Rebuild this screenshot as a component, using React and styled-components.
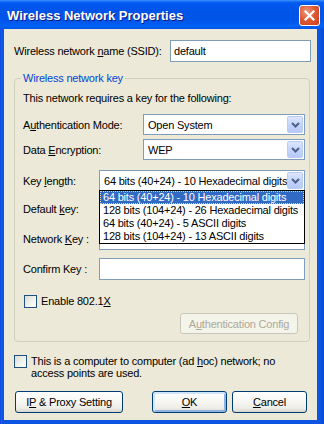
import React from 'react';
import styled, { createGlobalStyle } from 'styled-components';

const Global = createGlobalStyle`
  html, body { margin: 0; padding: 0; width: 324px; height: 424px; overflow: hidden; background: #0B55E2; }
  #root { width: 324px; height: 424px; }
  * { box-sizing: border-box; }
`;

const Window = styled.div`
  width: 324px;
  height: 424px;
  display: flex;
  flex-direction: column;
  background: linear-gradient(90deg, #0831D9 0px, #166AEE 1px, #0B55E2 2px, #0B55E2 320px, #0A4BD6 323px);
  font-family: "Liberation Sans", Arial, sans-serif;
  font-size: 11px;
  letter-spacing: -0.2px;
  color: #000;
`;

const TitleBar = styled.div`
  height: 29px;
  flex: none;
  display: flex;
  align-items: center;
  justify-content: space-between;
  padding: 0 4px 0 7px;
  background: linear-gradient(180deg, #3D95FF 0px, #0A63F2 2px, #0058EE 4px, #0053E6 14px, #0057EC 22px, #0262F5 26px, #0055E5 29px);
`;

const Title = styled.span`
  color: #fff;
  font-weight: bold;
  font-size: 13px;
  letter-spacing: 0;
  text-shadow: 1px 1px 0 #0A1883;
  padding-top: 1px;
`;

const CloseBtn = styled.div`
  width: 21px;
  height: 21px;
  margin-top: 2px;
  border: 1px solid #fff;
  border-radius: 3px;
  background: radial-gradient(circle at 35% 30%, #EE9C80 0%, #E05A36 45%, #C83F1E 100%);
  display: flex;
  align-items: center;
  justify-content: center;
`;

const Body = styled.div`
  flex: 1;
  margin: 0 7px 4px 4px;
  background: #ECE9D8;
  padding: 11px 6px 0 10px;
  display: flex;
  flex-direction: column;
`;

const Row = styled.div`
  display: flex;
  align-items: center;
  height: ${p => p.$h || 21}px;
  margin-top: ${p => p.$mt || 0}px;
  justify-content: ${p => p.$between ? 'space-between' : 'flex-start'};
`;

const Label = styled.span`
  width: ${p => (p.$w ? `${p.$w}px` : 'auto')};
  flex: none;
  white-space: nowrap;
`;

const U = styled.span`
  text-decoration: underline;
  text-underline-offset: 1px;
`;

const TextInput = styled.div`
  width: ${p => p.$w}px;
  height: 22px;
  border: 1px solid #7F9DB9;
  background: #fff;
  padding-left: 3px;
  display: flex;
  align-items: center;
  white-space: nowrap;
`;

const Combo = styled.div`
  position: relative;
  width: ${p => p.$w}px;
  height: 21px;
  border: 1px solid #7F9DB9;
  background: #fff;
  display: flex;
  align-items: center;
  padding: 1px 1px 1px 4px;
  z-index: ${p => (p.$open ? 5 : 'auto')};
`;

const ComboText = styled.span`
  flex: 1;
  white-space: nowrap;
  overflow: hidden;
`;

const ComboBtn = styled.div`
  width: 16px;
  height: 17px;
  flex: none;
  border: 1px solid #BCCBF2;
  border-radius: 2px;
  background: linear-gradient(180deg, #DCE6FE 0%, #C6D6FC 45%, #B6C9F7 100%);
  display: flex;
  align-items: center;
  justify-content: center;
`;

const List = styled.div`
  position: absolute;
  top: 100%;
  left: -1px;
  right: -1px;
  border: 1px solid #000;
  background: #fff;
  display: flex;
  flex-direction: column;
`;

const Item = styled.div`
  height: 13px;
  line-height: 13px;
  padding-left: 3px;
  white-space: nowrap;
  background: ${p => (p.$sel ? '#316AC5' : '#fff')};
  color: ${p => (p.$sel ? '#fff' : '#000')};
  outline: ${p => (p.$sel ? '1px dotted #E8D9A0' : 'none')};
  outline-offset: -1px;
`;

const Group = styled.div`
  margin: 16px 1px 0 0;
  border: 1px solid #D0D0BF;
  border-radius: 4px;
  padding: 0 4px 7px 8px;
  display: flex;
  flex-direction: column;
`;

const Legend = styled.span`
  align-self: flex-start;
  margin: -7px 0 0 -2px;
  padding: 0 2px;
  line-height: 13px;
  color: #0046D5;
  background: #ECE9D8;
`;

const Para = styled.div`
  line-height: ${p => p.$lh || 13}px;
  margin-top: ${p => p.$mt || 0}px;
  white-space: nowrap;
`;

const Check = styled.div`
  width: 13px;
  height: 13px;
  flex: none;
  border: 1px solid #1C5180;
  background: linear-gradient(135deg, #DCDCD7 0%, #F3F3EF 60%, #FFFFFF 100%);
  margin-left: ${p => p.$ml || 0}px;
  margin-right: 4px;
  align-self: flex-start;
`;

const CheckRow = styled.div`
  display: flex;
  align-items: flex-start;
  margin-top: ${p => p.$mt || 0}px;
  line-height: ${p => p.$lh || 13}px;
`;

const Button = styled.div`
  width: ${p => p.$w}px;
  height: ${p => p.$h || 22}px;
  flex: none;
  border: 1px solid ${p => (p.$disabled ? '#C9C7BA' : '#003C74')};
  border-radius: 3px;
  background: ${p => (p.$disabled
    ? '#F5F4EA'
    : 'linear-gradient(180deg, #FFFFFF 0%, #F8F8F5 40%, #EEEDE8 80%, #D9D4C9 100%)')};
  color: ${p => (p.$disabled ? '#ACA899' : '#000')};
  box-shadow: ${p => (p.$default
    ? 'inset 1px 1px 0 1px #CEE7FF, inset -1px -1px 0 1px #8DB2E3'
    : 'none')};
  display: flex;
  align-items: center;
  justify-content: center;
  white-space: pre;
  margin-left: ${p => p.$ml || 0}px;
  margin-right: ${p => p.$mr || 0}px;
`;

const ButtonRow = styled.div`
  display: flex;
  align-items: center;
  margin-top: ${p => p.$mt || 0}px;
  justify-content: ${p => p.$end ? 'flex-end' : 'space-between'};
`;

const Pair = styled.div`
  display: flex;
  gap: 5px;
  margin-right: 4px;
`;

const Chevron = () => (
  <svg width="9" height="6" viewBox="0 0 9 6">
    <path d="M1 1 L4.5 4.5 L8 1" fill="none" stroke="#4D6185" strokeWidth="2" />
  </svg>
);

const CloseX = () => (
  <svg width="11" height="11" viewBox="0 0 11 11">
    <path d="M1.5 1.5 L9.5 9.5 M9.5 1.5 L1.5 9.5" stroke="#fff" strokeWidth="2.2" strokeLinecap="square" />
  </svg>
);

const keyOptions = [
  '64 bits (40+24) - 10 Hexadecimal digits',
  '128 bits (104+24) - 26 Hexadecimal digits',
  '64 bits (40+24) - 5 ASCII digits',
  '128 bits (104+24) - 13 ASCII digits',
];

export default function App() {
  return (
    <>
      <Global />
      <Window>
        <TitleBar>
          <Title>Wireless Network Properties</Title>
          <CloseBtn><CloseX /></CloseBtn>
        </TitleBar>
        <Body>
          <Row $h={22} $between>
            <Label>Wireless network <U>n</U>ame (SSID):</Label>
            <TextInput $w={141}>default</TextInput>
          </Row>

          <Group>
            <Legend>Wireless network key</Legend>
            <Para $mt={7}>This network requires a key for the following:</Para>

            <Row $mt={9}>
              <Label $w={120}>A<U>u</U>thentication Mode:</Label>
              <Combo $w={162}>
                <ComboText>Open System</ComboText>
                <ComboBtn><Chevron /></ComboBtn>
              </Combo>
            </Row>

            <Row $mt={4}>
              <Label $w={120}>Data <U>E</U>ncryption:</Label>
              <Combo $w={162}>
                <ComboText>WEP</ComboText>
                <ComboBtn><Chevron /></ComboBtn>
              </Combo>
            </Row>

            <Row $mt={10}>
              <Label $w={76}>Key <U>l</U>ength:</Label>
              <Combo $w={206} $open>
                <ComboText>{keyOptions[0]}</ComboText>
                <ComboBtn><Chevron /></ComboBtn>
                <List>
                  {keyOptions.map((o, i) => (
                    <Item key={o} $sel={i === 0}>{o}</Item>
                  ))}
                </List>
              </Combo>
            </Row>

            <Row $mt={7}>
              <Label $w={76}>Default <U>k</U>ey:</Label>
              <Combo $w={206}>
                <ComboText />
                <ComboBtn><Chevron /></ComboBtn>
              </Combo>
            </Row>

            <Row $mt={9} $h={22}>
              <Label $w={76}>Network <U>K</U>ey :</Label>
              <TextInput $w={206} />
            </Row>

            <Row $mt={8} $h={22}>
              <Label $w={76}>Confirm Key :</Label>
              <TextInput $w={206} />
            </Row>

            <CheckRow $mt={15}>
              <Check $ml={1} />
              <span>Enable 802.1<U>X</U></span>
            </CheckRow>

            <ButtonRow $mt={5} $end>
              <Button $w={118} $h={21} $disabled $mr={7}>A<U>u</U>thentication Config</Button>
            </ButtonRow>
          </Group>

          <CheckRow $mt={13} $lh={12}>
            <Check />
            <span>
              This is a computer to computer (ad <U>h</U>oc) network; no<br />
              access points are used.
            </span>
          </CheckRow>

          <ButtonRow $mt={12}>
            <Button $w={108} $ml={1}>I<U>P</U>{' & Proxy Setting'}</Button>
            <Pair>
              <Button $w={75} $default><U>O</U>K</Button>
              <Button $w={75}><U>C</U>ancel</Button>
            </Pair>
          </ButtonRow>
        </Body>
      </Window>
    </>
  );
}
